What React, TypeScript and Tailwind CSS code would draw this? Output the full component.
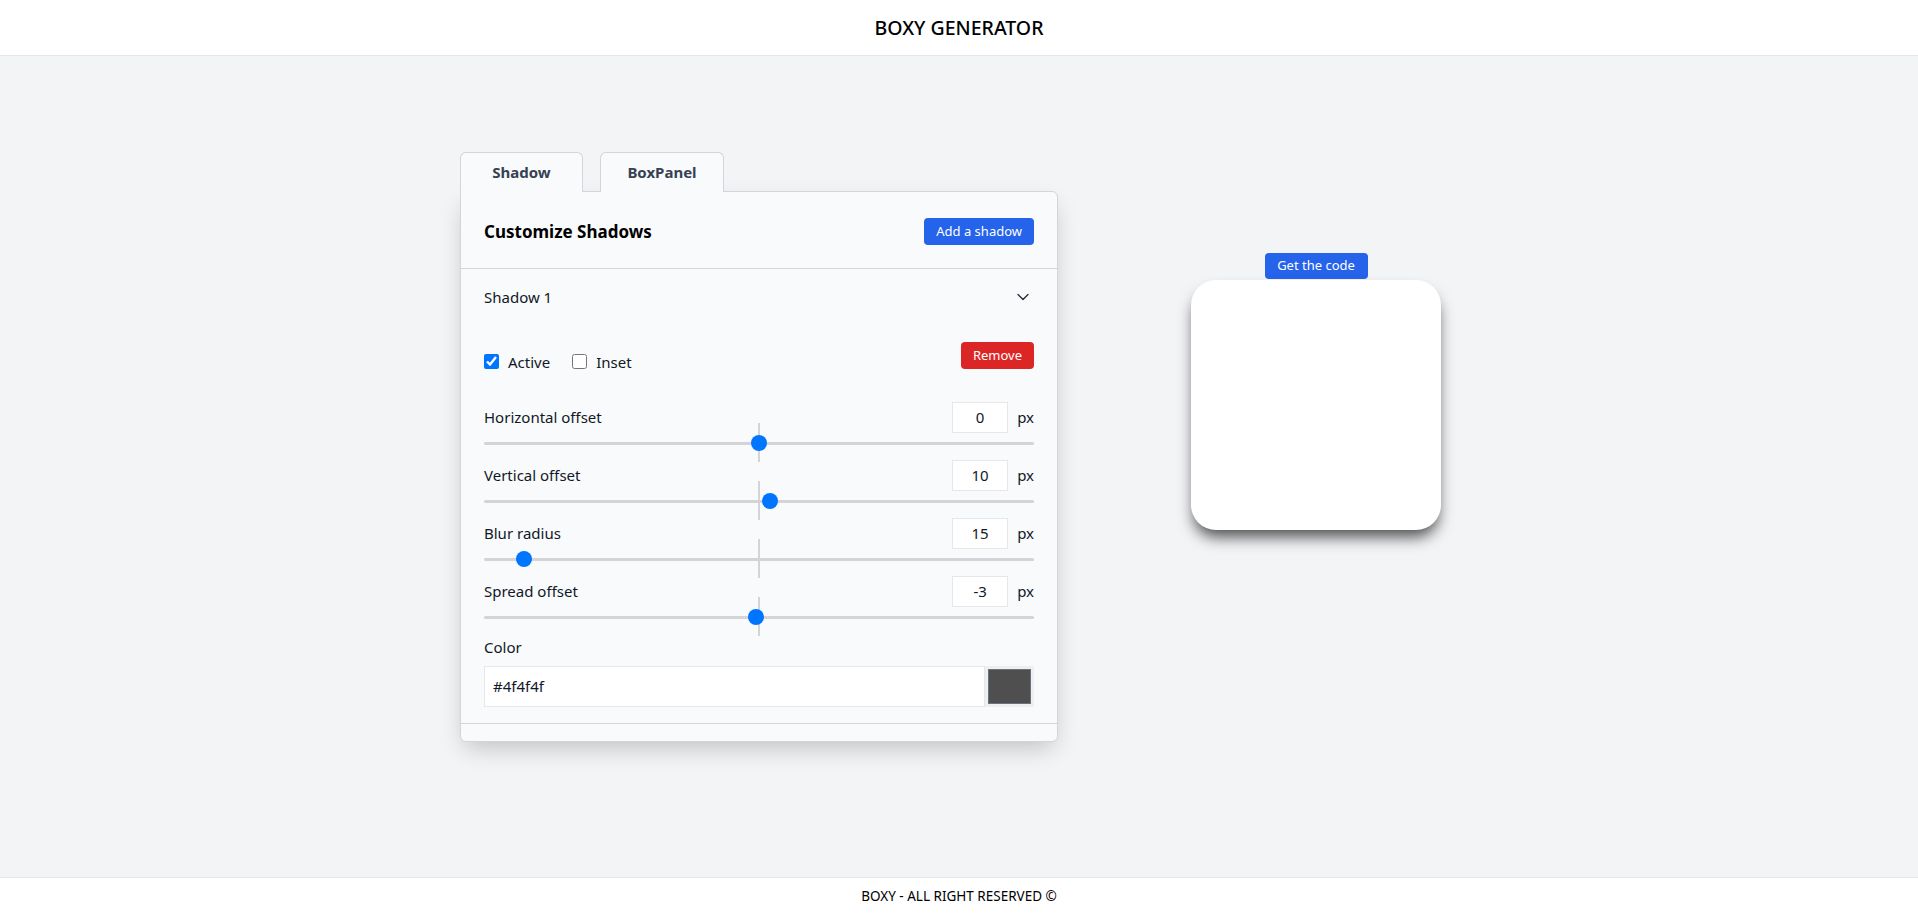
import React from 'react';
import { ChevronDown } from 'lucide-react';

interface SliderRowProps {
  label: string;
  value: number;
  min: number;
  max: number;
}

function SliderRow({ label, value, min, max }: SliderRowProps) {
  const frac = (value - min) / (max - min);
  return (
    <div className="flex flex-col">
      <div className="flex items-center justify-between h-[31px]">
        <span className="text-[15px] text-gray-900">{label}</span>
        <div className="flex items-center">
          <div className="w-[56px] h-[31px] bg-white border border-gray-200 flex items-center justify-center text-[15px] text-gray-900">
            {value}
          </div>
          <span className="ml-[9px] text-[15px] text-gray-900">px</span>
        </div>
      </div>
      <div className="relative h-[20px] flex items-center">
        <div className="w-full h-[3px] bg-[#d4d4d8] rounded-full" />
        {/* center marker */}
        <div className="absolute left-1/2 -translate-x-1/2 top-[-10px] w-[2px] h-[39px] bg-[#d4d4d8]" />
        <div
          className="absolute top-[2px] w-4 h-4 rounded-full bg-[#0075ff]"
          style={{ left: `calc((100% - 16px) * ${frac})` }}
        />
      </div>
    </div>
  );
}

export default function App() {
  return (
    <div className="min-h-screen flex flex-col bg-gray-100 font-['Noto_Sans',sans-serif] text-gray-900">
      <header className="h-[56px] shrink-0 bg-white border-b border-gray-200 flex items-center justify-center">
        <h1 className="text-[19.5px] font-medium text-black">BOXY GENERATOR</h1>
      </header>

      <main className="flex-1 flex justify-center items-start gap-[133px] pt-[96px] pr-[17px]">
        {/* Editor panel */}
        <div className="w-[598px] flex flex-col">
          <div className="flex gap-[17px] relative z-10 -mb-px">
            <button className="w-[123px] h-[40px] bg-gray-50 border border-b-0 border-gray-300 rounded-t-md text-[15px] font-bold text-gray-700">
              Shadow
            </button>
            <button className="w-[124px] h-[40px] bg-gray-50 border border-b-0 border-gray-300 rounded-t-md text-[15px] font-bold text-gray-700">
              BoxPanel
            </button>
          </div>

          <div className="bg-gray-50 border border-gray-300 rounded-b-md rounded-tr-md shadow-[0_10px_25px_-5px_rgba(0,0,0,0.22)]">
            <div className="h-[77px] px-[23px] pt-[3px] flex items-center justify-between border-b border-gray-300">
              <h2 className="text-[17px] font-bold text-black">Customize Shadows</h2>
              <button className="h-[27px] px-3 rounded bg-[#2563eb] text-white text-[13px]">Add a shadow</button>
            </div>

            <div className="border-b border-gray-300">
              <button className="w-full h-[56px] px-[23px] flex items-center justify-between">
                <span className="text-[15px] text-gray-900">Shadow 1</span>
                <ChevronDown className="w-5 h-5 text-gray-800 mr-px" strokeWidth={1.5} />
              </button>

              <div className="px-[23px] pt-[17px] pb-4">
                <div className="flex items-end justify-between">
                  <div className="flex items-center gap-[22px] mb-[-4px]">
                    <label className="flex items-center gap-[9px] text-[15px]">
                      <input type="checkbox" defaultChecked className="w-[15px] h-[15px] m-0 accent-[#0075ff]" />
                      Active
                    </label>
                    <label className="flex items-center gap-[9px] text-[15px]">
                      <input type="checkbox" className="w-[15px] h-[15px] m-0" />
                      Inset
                    </label>
                  </div>
                  <button className="h-[27px] px-3 rounded bg-[#dc2626] text-white text-[13px]">Remove</button>
                </div>

                <div className="mt-[33px] flex flex-col gap-[7px]">
                  <SliderRow label="Horizontal offset" value={0} min={-250} max={250} />
                  <SliderRow label="Vertical offset" value={10} min={-250} max={250} />
                  <SliderRow label="Blur radius" value={15} min={0} max={250} />
                  <SliderRow label="Spread offset" value={-3} min={-250} max={250} />
                </div>

                <div className="mt-[10px] text-[15px] leading-5">Color</div>
                <div className="mt-[9px] flex h-[41px]">
                  <div className="flex-1 bg-white border border-gray-200 flex items-center pl-2 text-[15px]">#4f4f4f</div>
                  <div className="w-[49px] bg-[#efefef] p-[3px] flex">
                    <div className="flex-1 bg-[#4f4f4f] border border-gray-500" />
                  </div>
                </div>
              </div>
            </div>
            <div className="h-[17px]" />
          </div>
        </div>

        {/* Preview */}
        <div className="w-[250px] mt-[101px] flex flex-col items-center">
          <button className="w-[103px] h-[26px] rounded bg-[#2563eb] text-white text-[13px]">Get the code</button>
          <div className="mt-px w-[250px] h-[250px] bg-white rounded-[25px] shadow-[0_10px_15px_-3px_#4f4f4f]" />
        </div>
      </main>

      <footer className="h-[37px] shrink-0 bg-white border-t border-gray-200 flex items-center justify-center">
        <span className="text-[13.5px] text-black">BOXY - ALL RIGHT RESERVED ©</span>
      </footer>
    </div>
  );
}
